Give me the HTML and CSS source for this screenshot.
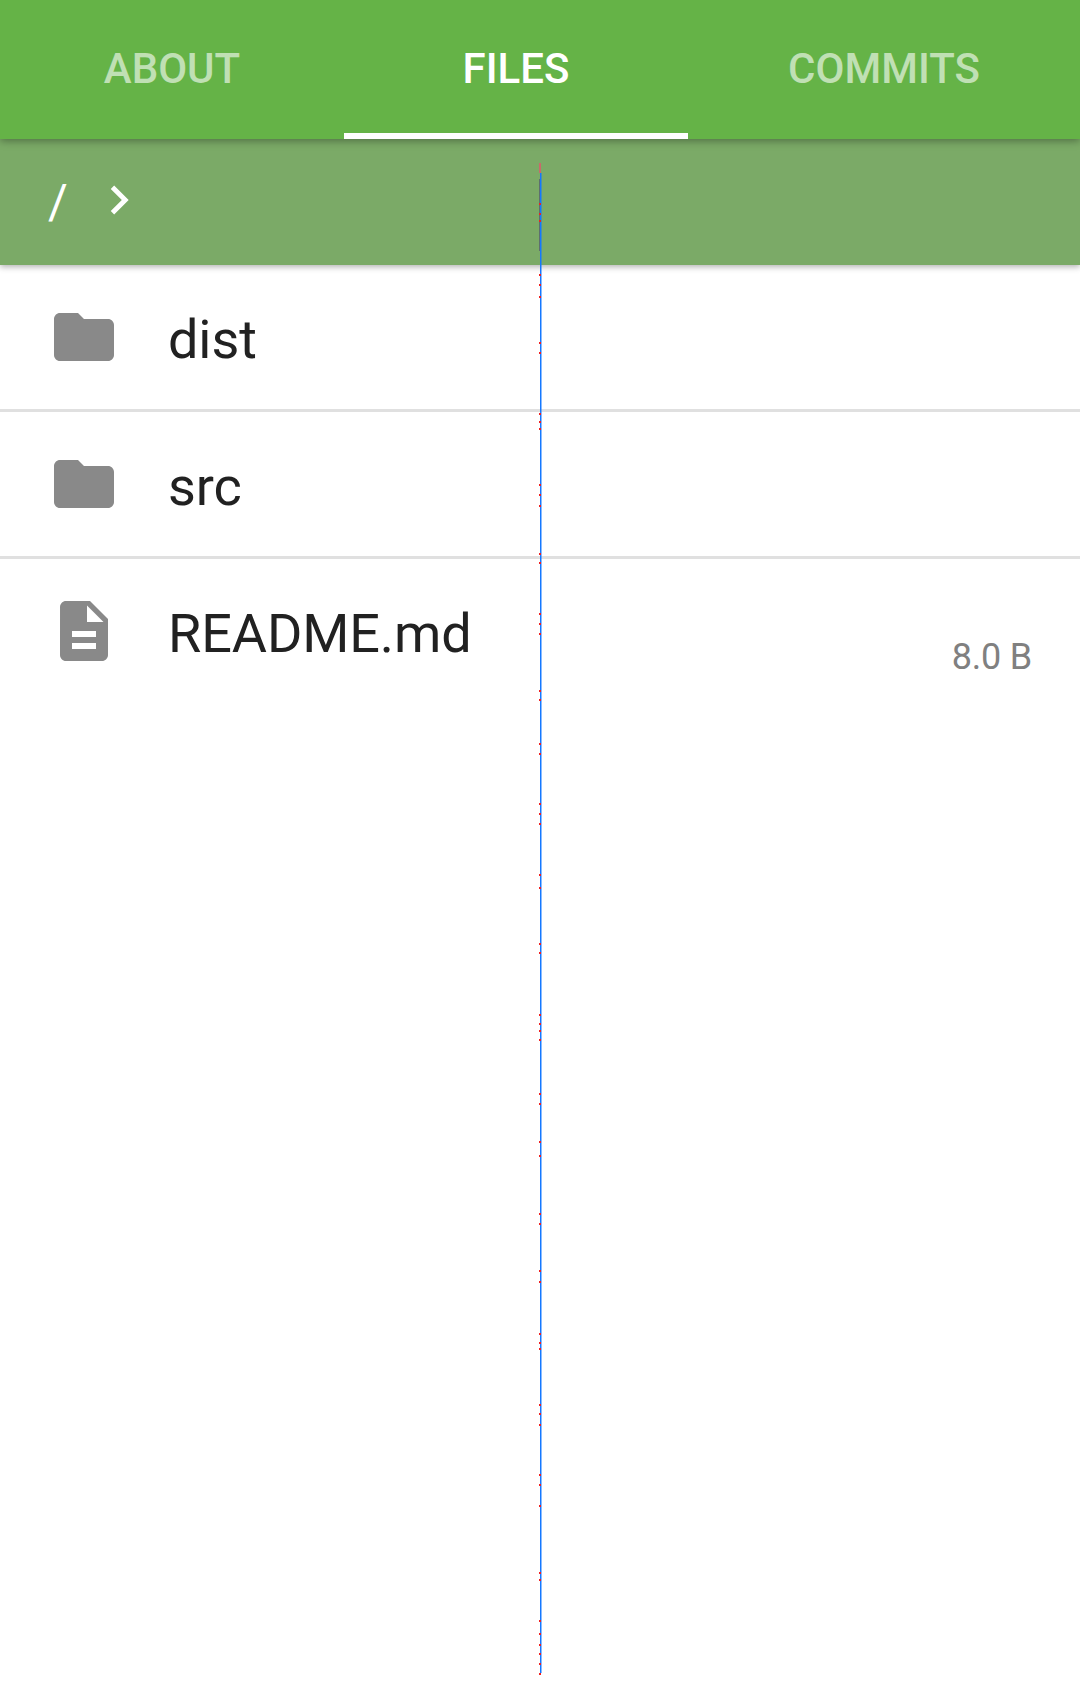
FILE: index.html
```html
<!DOCTYPE html>
<html lang="en">
<head>
<meta charset="utf-8">
<title>Files</title>
<link rel="stylesheet" href="styles.css">
</head>
<body>
<div class="page">
  <nav class="tabs">
    <a class="tab">ABOUT</a>
    <a class="tab tab-active">FILES</a>
    <a class="tab">COMMITS</a>
  </nav>
  <div class="crumbs">
    <span class="crumb-root">/</span>
    <svg class="crumb-chevron" viewBox="0 0 24 24"><path d="M10 6L8.59 7.41 13.17 12l-4.58 4.59L10 18l6-6z"/></svg>
  </div>
  <ul class="list">
    <li class="row">
      <svg class="row-icon" viewBox="0 0 24 24"><path d="M10 4H4c-1.1 0-2 .9-2 2v12c0 1.1.9 2 2 2h16c1.1 0 2-.9 2-2V8c0-1.1-.9-2-2-2h-8l-2-2z"/></svg>
      <span class="row-name">dist</span>
    </li>
    <li class="row">
      <svg class="row-icon" viewBox="0 0 24 24"><path d="M10 4H4c-1.1 0-2 .9-2 2v12c0 1.1.9 2 2 2h16c1.1 0 2-.9 2-2V8c0-1.1-.9-2-2-2h-8l-2-2z"/></svg>
      <span class="row-name">src</span>
    </li>
    <li class="row row-last">
      <svg class="row-icon" viewBox="0 0 24 24"><path d="M14 2H6c-1.1 0-1.99.9-1.99 2L4 20c0 1.1.89 2 1.99 2H18c1.1 0 2-.9 2-2V8l-6-6zm2 16H8v-2h8v2zm0-4H8v-2h8v2zm-3-5V3.5L18.5 9H13z"/></svg>
      <span class="row-name">README.md</span>
      <span class="row-size">8.0 B</span>
    </li>
  </ul>
  <svg class="guide" width="6" height="1699" viewBox="0 0 6 1699">
    <rect class="guide-top" x="2" y="163" width="2" height="10"/>
    <rect class="guide-dark" x="2" y="179" width="1" height="72"/>
    <rect class="guide-line" x="3" y="173" width="1.5" height="1500"/>
    <g class="guide-dots">
      <rect x="2" y="203" width="2" height="2"/><rect x="2" y="213" width="2" height="2"/><rect x="2" y="220" width="2" height="2"/>
      <rect x="2" y="274" width="2" height="2"/><rect x="2" y="284" width="2" height="2"/><rect x="2" y="296" width="2" height="2"/>
      <rect x="2" y="342" width="2" height="2"/><rect x="2" y="352" width="2" height="2"/><rect x="2" y="413" width="2" height="2"/>
      <rect x="2" y="421" width="2" height="2"/><rect x="2" y="428" width="2" height="2"/><rect x="2" y="484" width="2" height="2"/>
      <rect x="2" y="494" width="2" height="2"/><rect x="2" y="505" width="2" height="2"/><rect x="2" y="553" width="2" height="2"/>
      <rect x="2" y="562" width="2" height="2"/><rect x="2" y="613" width="2" height="2"/><rect x="2" y="623" width="2" height="2"/>
      <rect x="2" y="633" width="2" height="2"/><rect x="2" y="690" width="2" height="2"/><rect x="2" y="699" width="2" height="2"/>
      <rect x="2" y="743" width="2" height="2"/><rect x="2" y="753" width="2" height="2"/><rect x="2" y="803" width="2" height="2"/>
      <rect x="2" y="813" width="2" height="2"/><rect x="2" y="823" width="2" height="2"/><rect x="2" y="874" width="2" height="2"/>
      <rect x="2" y="887" width="2" height="2"/><rect x="2" y="943" width="2" height="2"/><rect x="2" y="952" width="2" height="2"/>
      <rect x="2" y="1014" width="2" height="2"/><rect x="2" y="1023" width="2" height="2"/><rect x="2" y="1030" width="2" height="2"/>
      <rect x="2" y="1039" width="2" height="2"/><rect x="2" y="1093" width="2" height="2"/><rect x="2" y="1103" width="2" height="2"/>
      <rect x="2" y="1141" width="2" height="2"/><rect x="2" y="1155" width="2" height="2"/><rect x="2" y="1213" width="2" height="2"/>
      <rect x="2" y="1223" width="2" height="2"/><rect x="2" y="1270" width="2" height="2"/><rect x="2" y="1281" width="2" height="2"/>
      <rect x="2" y="1333" width="2" height="2"/><rect x="2" y="1342" width="2" height="2"/><rect x="2" y="1348" width="2" height="2"/>
      <rect x="2" y="1404" width="2" height="2"/><rect x="2" y="1413" width="2" height="2"/><rect x="2" y="1424" width="2" height="2"/>
      <rect x="2" y="1474" width="2" height="2"/><rect x="2" y="1484" width="2" height="2"/><rect x="2" y="1505" width="2" height="2"/>
      <rect x="2" y="1572" width="2" height="2"/><rect x="2" y="1579" width="2" height="2"/><rect x="2" y="1620" width="2" height="2"/>
      <rect x="2" y="1633" width="2" height="2"/><rect x="2" y="1644" width="2" height="2"/><rect x="2" y="1653" width="2" height="2"/>
      <rect x="2" y="1663" width="2" height="2"/><rect x="2" y="1673" width="2" height="2"/>
    </g>
  </svg>
</div>
</body>
</html>
```
FILE: styles.css
```css
* { box-sizing: border-box; }
html, body { margin: 0; padding: 0; background: #fff; }
.page {
  position: relative;
  width: 1080px;
  height: 1699px;
  overflow: hidden;
  font-family: Roboto, "Liberation Sans", sans-serif;
}
.tabs {
  position: relative;
  z-index: 2;
  display: grid;
  grid-template-columns: 344px 344px 392px;
  height: 139px;
  background: #65b347;
  box-shadow: 0 2px 8px rgba(0,0,0,.35);
}
.tab {
  display: flex;
  align-items: center;
  justify-content: center;
  padding-bottom: 2px;
  font-size: 42px;
  font-weight: 500;
  color: rgba(255,255,255,.6);
}
.tab-active {
  color: #fff;
  border-bottom: 6px solid #fff;
  padding-top: 6px;
  padding-bottom: 2px;
}
.crumbs {
  position: relative;
  z-index: 1;
  display: flex;
  align-items: center;
  height: 126px;
  padding-left: 48px;
  background: #7baa67;
  box-shadow: 0 2px 6px rgba(0,0,0,.3);
  color: #fff;
}
.crumb-root {
  font-size: 48px;
  line-height: 1;
  width: 42px;
}
.crumb-chevron {
  width: 58px;
  height: 58px;
  fill: #fff;
  margin-bottom: 4px;
}
.list {
  list-style: none;
  margin: 0;
  padding: 0;
}
.row {
  position: relative;
  display: flex;
  align-items: center;
  height: 147px;
  padding: 0 48px;
  border-bottom: 3px solid #e0e0e0;
}
.row-last { border-bottom-color: transparent; }
.row-icon {
  flex: none;
  width: 72px;
  height: 72px;
  fill: #898989;
  margin-right: 48px;
}
.row-name {
  font-size: 54px;
  letter-spacing: -0.1px;
  color: #212121;
  padding-top: 4px;
}
.row-size {
  margin-left: auto;
  padding-top: 51px;
  font-size: 36px;
  letter-spacing: -0.2px;
  color: #808080;
}
.guide {
  position: absolute;
  left: 537px;
  top: 0;
  z-index: 3;
}
.guide-top { fill: #c96a6a; }
.guide-dark { fill: #5e6e6e; }
.guide-line { fill: #1478ff; }
.guide-dots { fill: #f02020; }
```
